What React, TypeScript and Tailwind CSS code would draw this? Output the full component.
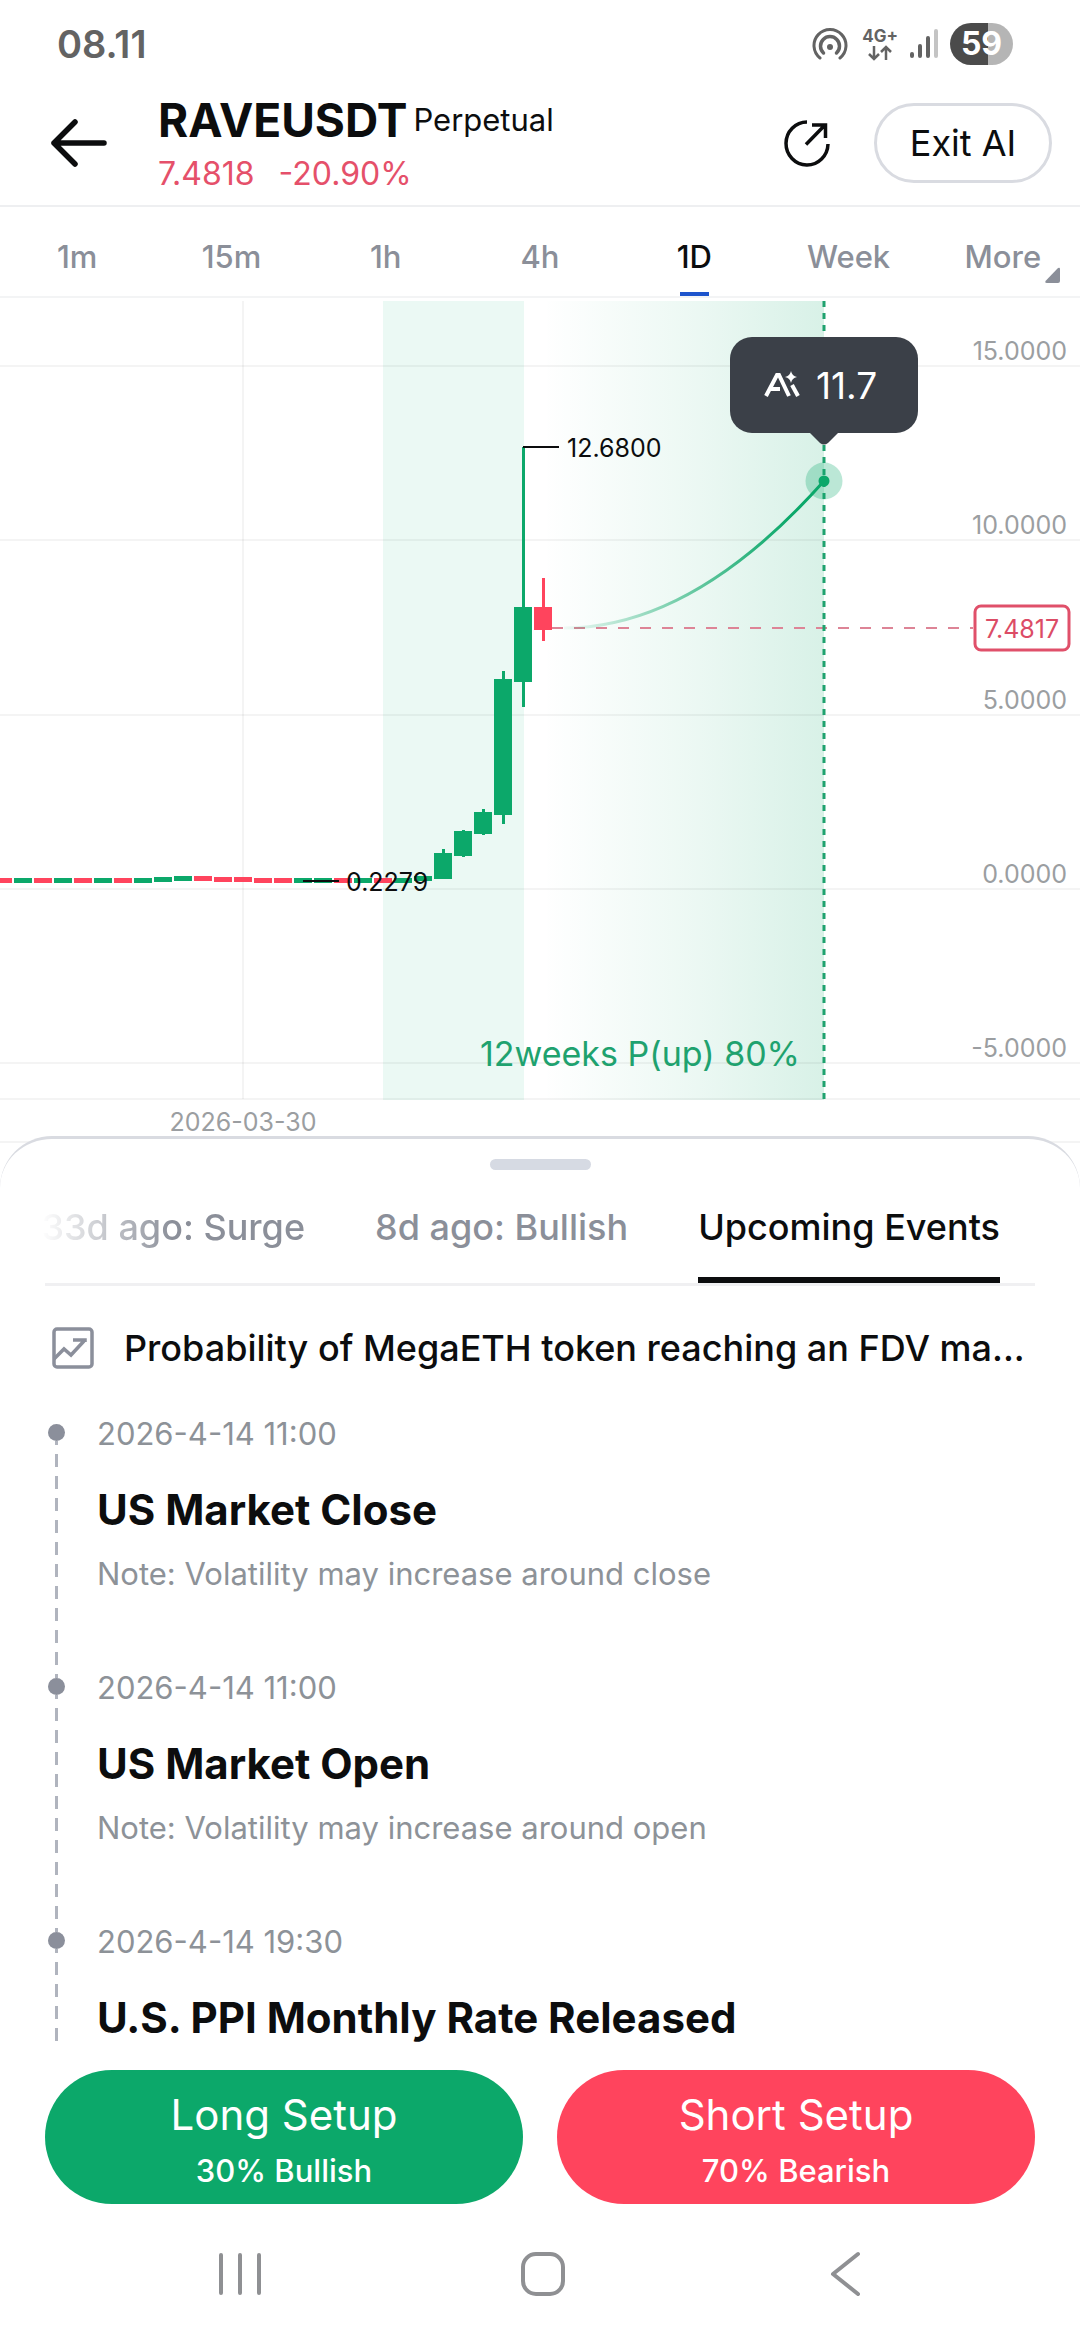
import { useState } from "react"

type Candle = {
  up: boolean
  top: number
  bottom: number
  high?: number
  low?: number
}

type EventItem = {
  time: string
  title: string
  note?: string
}

const UP = "#0ca86a"
const DOWN = "#ff445d"

const intervals = ["1m", "15m", "1h", "4h", "1D", "Week", "More"]

const historyTabs = ["33d ago: Surge", "8d ago: Bullish", "Upcoming Events"]

const events: EventItem[] = [
  { time: "2026-4-14 11:00", title: "US Market Close", note: "Note: Volatility may increase around close" },
  { time: "2026-4-14 11:00", title: "US Market Open", note: "Note: Volatility may increase around open" },
  { time: "2026-4-14 19:30", title: "U.S. PPI Monthly Rate Released" },
]

// chart coordinates, one candle every 20 units
const candles: Candle[] = [
  { up: false, top: 580, bottom: 585 },
  { up: true, top: 580, bottom: 585 },
  { up: false, top: 580, bottom: 585 },
  { up: true, top: 580, bottom: 585 },
  { up: false, top: 580, bottom: 585 },
  { up: true, top: 580, bottom: 585 },
  { up: false, top: 580, bottom: 585 },
  { up: true, top: 580, bottom: 585 },
  { up: true, top: 579, bottom: 584 },
  { up: true, top: 578, bottom: 583 },
  { up: false, top: 578, bottom: 583 },
  { up: false, top: 579, bottom: 584 },
  { up: false, top: 579, bottom: 584 },
  { up: false, top: 580, bottom: 585 },
  { up: false, top: 580, bottom: 585 },
  { up: true, top: 580, bottom: 585 },
  { up: true, top: 580, bottom: 585 },
  { up: false, top: 580, bottom: 585 },
  { up: true, top: 580, bottom: 585 },
  { up: false, top: 580, bottom: 585 },
  { up: true, top: 580, bottom: 585 },
  { up: true, top: 578, bottom: 583 },
  { up: true, top: 555, bottom: 581, high: 551 },
  { up: true, top: 533, bottom: 558, high: 532, low: 559 },
  { up: true, top: 514, bottom: 536, high: 511, low: 537 },
  { up: true, top: 381, bottom: 517, high: 373, low: 526 },
  { up: true, top: 309, bottom: 384, high: 149, low: 409 },
  { up: false, top: 309, bottom: 332, high: 280, low: 343 },
]

const gridLines = [
  { y: 68, label: "15.0000" },
  { y: 242, label: "10.0000" },
  { y: 417, label: "5.0000" },
  { y: 591, label: "0.0000" },
  { y: 765, label: "-5.0000" },
]

export default function App() {
  const [interval, setInterval] = useState("1D")
  const [tab, setTab] = useState("Upcoming Events")

  return (
    <div className="flex min-h-screen flex-col overflow-hidden bg-white font-['Inter',sans-serif] text-[#0c0d0e]">
      <StatusBar />

      {/* Header */}
      <header className="flex h-[127px] items-center border-b-2 border-[#eeeff1] pr-7 pl-[50px]">
        <button aria-label="Back">
          <BackArrow />
        </button>
        <div className="ml-[50px] flex-1 pt-2">
          <div className="flex items-center gap-[6px]">
            <h1 className="text-[46px] leading-[54px] font-bold">RAVEUSDT</h1>
            <span className="text-[31px] leading-[54px]">Perpetual</span>
          </div>
          <div className="flex gap-6 text-[32px] leading-[54px] text-[#e5506a]">
            <span>7.4818</span>
            <span>-20.90%</span>
          </div>
        </div>
        <button aria-label="Share" className="mr-[42px]">
          <ShareIcon />
        </button>
        <button className="h-20 w-[178px] rounded-full border-[3px] border-[#d9dbe1] text-[36px] leading-10">
          Exit AI
        </button>
      </header>

      {/* Intervals */}
      <nav className="flex h-[91px] border-b-2 border-[#f3f4f5]">
        {intervals.map((name) => (
          <button
            key={name}
            onClick={() => setInterval(name)}
            className={`flex flex-1 flex-col items-center justify-between text-[31px] font-medium ${
              interval === name ? "text-[#0c0d0e]" : "text-[#8b8f99]"
            }`}
          >
            <span className="relative mt-7 leading-[44px]">
              {name}
              {name === "More" && <MoreMark />}
            </span>
            {interval === name && <span className="h-1 w-[29px] bg-[#1d54cc]" />}
          </button>
        ))}
      </nav>

      <PriceChart />

      {/* Bottom sheet */}
      <section className="relative z-10 -mt-[7px] flex flex-1 flex-col rounded-t-[52px] border-t-[3px] border-[#d9dbe1] bg-white">
        <div className="mx-auto mt-5 h-[11px] w-[101px] rounded-full bg-[#d6dae3]" />

        <div className="mx-[45px] mt-[22px] flex h-[94px] justify-end gap-[70px] border-b-[3px] border-[#f0f0f2] pr-[35px]">
          {historyTabs.map((name, i) => (
            <button
              key={name}
              onClick={() => setTab(name)}
              className={`border-b-[6px] pt-2 pb-6 text-[36px] leading-[48px] font-medium whitespace-nowrap ${
                tab === name ? "border-[#0c0d0e] text-[#0c0d0e]" : "border-transparent text-[#8b8f99]"
              } ${i === 0 ? "mask-l-from-50% mask-l-to-100%" : ""}`}
            >
              {name}
            </button>
          ))}
        </div>

        <a href="#probability" className="mx-[45px] mt-8 flex h-[60px] items-center gap-[30px] pl-[7px]">
          <TrendIcon />
          <span className="text-[36px] leading-[48px] font-medium whitespace-nowrap">
            Probability of MegaETH token reaching an FDV ma...
          </span>
        </a>

        <ol className="mx-12 mt-[46px] flex flex-col">
          {events.map((event) => (
            <TimelineRow key={event.title} event={event} />
          ))}
        </ol>

        <div className="mx-[45px] mt-6 grid grid-cols-2 gap-[34px] text-white">
          <button className="flex h-[134px] flex-col items-center justify-center rounded-full bg-[#0ca86a] pt-[10px]">
            <span className="text-[42px] leading-[58px]">Long Setup</span>
            <span className="text-[31px] leading-[54px] font-medium">30% Bullish</span>
          </button>
          <button className="flex h-[134px] flex-col items-center justify-center rounded-full bg-[#ff445d] pt-[10px]">
            <span className="text-[42px] leading-[58px]">Short Setup</span>
            <span className="text-[31px] leading-[54px] font-medium">70% Bearish</span>
          </button>
        </div>

        <SystemNav />
      </section>
    </div>
  )
}

// StatusBar Component
function StatusBar() {
  return (
    <div className="flex h-20 items-center justify-between pt-2 pr-[67px] pl-[57px] text-[#636363]">
      <span className="text-[38px] leading-[44px] font-semibold">08.11</span>
      <div className="flex items-center">
        <svg width="36" height="36" viewBox="0 0 36 36" fill="none" stroke="currentColor" strokeWidth="3" strokeLinecap="round">
          <path d="M8 32A16 16 0 1 1 28 32" />
          <path d="M11.500 27A9.500 9.500 0 1 1 24.500 27" strokeWidth="3.500" />
          <circle cx="18" cy="21" r="3" fill="currentColor" stroke="none" />
        </svg>
        <div className="ml-[14px] flex flex-col items-center">
          <span className="text-[17px] leading-[18px] font-bold">4G+</span>
          <svg width="26" height="16" viewBox="0 0 26 16" fill="none" stroke="currentColor" strokeWidth="2.500">
            <path d="M7 1v13M2 9l5 5 5-5M19 15V2M14 7l5-5 5 5" />
          </svg>
        </div>
        <svg className="ml-3" width="28" height="32" viewBox="0 0 28 32" fill="none" strokeWidth="4" strokeLinecap="round" stroke="currentColor">
          <path d="M2 26v2M10 18v10M18 10v18" />
          <path d="M26 3v25" stroke="#c4c4c4" />
        </svg>
        <div className="ml-3 flex h-[42px] w-[63px] items-center justify-center rounded-full bg-linear-to-r from-[#4b4b4b] from-60% to-[#b5b5b5] to-60% text-[32px] leading-[42px] font-bold text-white">
          59
        </div>
      </div>
    </div>
  )
}

// PriceChart Component
function PriceChart() {
  return (
    <svg viewBox="0 0 1080 845" className="w-full" fontSize="25" role="img" aria-label="RAVEUSDT daily candles">
      <defs>
        <linearGradient id="forecast" x1="0" x2="1" y1="0" y2="0">
          <stop offset="0" stopColor={UP} stopOpacity="0" />
          <stop offset="0.55" stopColor={UP} stopOpacity="0.08" />
          <stop offset="1" stopColor={UP} stopOpacity="0.16" />
        </linearGradient>
        <linearGradient id="curve" gradientUnits="userSpaceOnUse" x1="564" x2="790" y1="0" y2="0">
          <stop offset="0" stopColor={UP} stopOpacity="0.05" />
          <stop offset="1" stopColor={UP} />
        </linearGradient>
      </defs>

      <rect x="383" y="3" width="141" height="799" fill="#ebf9f4" />
      <rect x="543" y="3" width="281" height="799" fill="url(#forecast)" />

      {/* Grid */}
      <g stroke="#000000" strokeOpacity="0.045" strokeWidth="2">
        {gridLines.map((line) => (
          <line key={line.label} x1="0" x2="1080" y1={line.y} y2={line.y} />
        ))}
        <line x1="0" x2="1080" y1="801" y2="801" />
        <line x1="0" x2="1080" y1="844" y2="844" />
        <line x1="243" x2="243" y1="3" y2="801" />
      </g>
      <g fill="#9b9ea1" textAnchor="end">
        {gridLines.map((line) => (
          <text key={line.label} x="1067" y={line.y - 6}>
            {line.label}
          </text>
        ))}
      </g>
      <text x="243" y="833" fill="#9b9ea1" textAnchor="middle">
        2026-03-30
      </text>

      {/* Candles */}
      {candles.map((candle, i) => {
        const x = i * 20 - 6
        const color = candle.up ? UP : DOWN
        const high = candle.high ?? candle.top
        const low = candle.low ?? candle.bottom
        return (
          <g key={i} fill={color}>
            <rect x={x + 8} y={high} width="3" height={low - high} />
            <rect x={x} y={candle.top} width="18" height={candle.bottom - candle.top} />
          </g>
        )
      })}

      <path d="M523 149H559M303 583H339" stroke="#0c0d0e" strokeWidth="2" />
      <text x="567" y="159" fill="#0c0d0e">12.6800</text>
      <text x="346" y="593" fill="#0c0d0e">0.2279</text>

      {/* Last price */}
      <line x1="552" x2="973" y1="330" y2="330" stroke="#dd8496" strokeWidth="2" strokeDasharray="11 11" />
      <rect x="975" y="308" width="94" height="44" rx="6" fill="#ffffff" stroke="#e0506a" strokeWidth="3" />
      <text x="1022" y="340" fill="#dc4c66" textAnchor="middle">7.4817</text>

      {/* Forecast */}
      <line x1="824" x2="824" y1="3" y2="802" stroke="#1fa26f" strokeWidth="3" strokeDasharray="6 6" />
      <path d="M564 330Q693 330 824 183" fill="none" stroke="url(#curve)" strokeWidth="3" />
      <circle cx="824" cy="183" r="18.500" fill={UP} fillOpacity="0.28" />
      <circle cx="824" cy="183" r="5.500" fill={UP} />
      <text x="800" y="768" fontSize="34" fill="#1fa26f" textAnchor="end">12weeks P(up) 80%</text>

      {/* Forecast tooltip */}
      <path d="M809 134L820 145Q824 148 828 145L839 134Z" fill="#3b4048" />
      <rect x="730" y="39" width="188" height="96" rx="22" fill="#3b4048" />
      <g fill="none" stroke="#ffffff" strokeWidth="4">
        <path d="M766 98L777 77H779L789 98M771 91H780" />
        <path d="M792 87L798 98" />
      </g>
      <path d="M791 73Q792 78 797 79Q792 80 791 85Q790 80 785 79Q790 78 791 73Z" fill="#ffffff" />
      <text x="816" y="101" fontSize="37" fill="#ffffff">11.7</text>
    </svg>
  )
}

// TimelineRow Component
function TimelineRow({ event }: { event: EventItem }) {
  return (
    <li className={`flex gap-8 ${event.note ? "h-[254px]" : "h-[114px]"}`}>
      <div className="flex w-[17px] flex-col items-center">
        <span className="size-[17px] rounded-full bg-[#8b8f9b]" />
        <span className="w-[3px] flex-1 bg-[repeating-linear-gradient(to_bottom,#b0b4be_0_4px,transparent_4px_13px,#b0b4be_13px_22px)]" />
      </div>
      <div className="-mt-3">
        <time className="block text-[31px] leading-[44px] text-[#8d9298]">{event.time}</time>
        <h2 className="mt-[30px] text-[42px] leading-[48px] font-bold">{event.title}</h2>
        {event.note && <p className="mt-[18px] text-[31px] leading-[44px] text-[#8d9298]">{event.note}</p>}
      </div>
    </li>
  )
}

// SystemNav Component
function SystemNav() {
  return (
    <div className="mt-10 flex h-[60px] items-center justify-between pr-[211px] pl-[215px] text-[#8f9093]">
      <button aria-label="Recents">
        <svg width="50" height="46" viewBox="0 0 50 46" stroke="currentColor" strokeWidth="4" strokeLinecap="round">
          <path d="M6 4v38M25 4v38M44 4v38" />
        </svg>
      </button>
      <button aria-label="Home">
        <svg width="46" height="46" viewBox="0 0 46 46" fill="none" stroke="currentColor" strokeWidth="4">
          <rect x="3" y="3" width="40" height="40" rx="13" />
        </svg>
      </button>
      <button aria-label="Back">
        <svg width="48" height="46" viewBox="0 0 48 46" fill="none" stroke="currentColor" strokeWidth="4" strokeLinecap="round" strokeLinejoin="round">
          <path d="M37 3L12 23L37 43" />
        </svg>
      </button>
    </div>
  )
}

function BackArrow() {
  return (
    <svg width="58" height="50" viewBox="0 0 58 50" fill="none" stroke="currentColor" strokeWidth="5.500" strokeLinecap="round" strokeLinejoin="round">
      <path d="M54 25H4M25 4L4 25L25 46" />
    </svg>
  )
}

function ShareIcon() {
  return (
    <svg width="50" height="50" viewBox="0 0 50 50" fill="none" stroke="currentColor" strokeWidth="3.500">
      <path d="M25 4A21 21.500 0 1 0 46 26" />
      <path d="M24 26.500L43 7M30 7H43.500V20" />
    </svg>
  )
}

function MoreMark() {
  return (
    <svg className="absolute -bottom-1 left-full ml-1" width="15" height="16" viewBox="0 0 15 16" fill="currentColor">
      <path d="M13 1Q15 0 15 2V14Q15 16 13 16H2Q-1 16 1 13.500Z" />
    </svg>
  )
}

function TrendIcon() {
  return (
    <svg width="42" height="42" viewBox="0 0 42 42" fill="none" stroke="#8b8f9b" strokeWidth="3.500">
      <rect x="2" y="2" width="38" height="38" rx="3" />
      <path d="M2 32L12 22L19 28L32 14M21 13H33V15" />
    </svg>
  )
}
